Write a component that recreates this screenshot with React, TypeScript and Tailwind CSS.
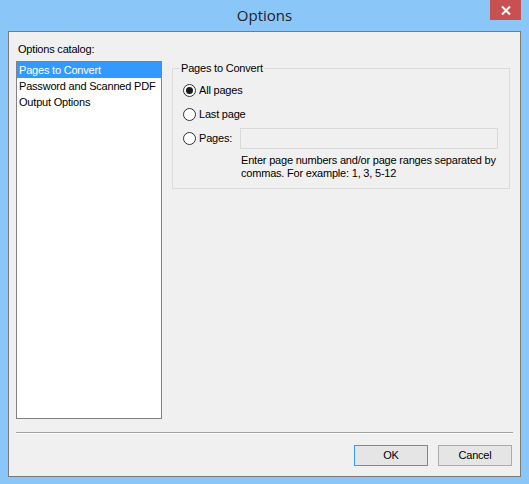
import React from 'react';

const font = { fontFamily: '"Liberation Sans", Arial, sans-serif' };

function Radio({ checked }: { checked?: boolean }) {
  return (
    <span className="w-[13px] h-[13px] rounded-full border border-[#333333] bg-white flex items-center justify-center shrink-0">
      {checked && <span className="w-[7px] h-[7px] rounded-full bg-[#1a1a1a]" />}
    </span>
  );
}

export default function App() {
  const catalog = ['Pages to Convert', 'Password and Scanned PDF', 'Output Options'];

  return (
    <div className="w-[529px] h-[484px] bg-[#8bc6f8] flex flex-col text-[11px] tracking-[-0.2px] text-black" style={font}>
      {/* Title bar */}
      <div className="h-[31px] relative flex items-center justify-center shrink-0">
        <span className="text-[15px] tracking-normal text-[#222] pb-[1px]" style={{ fontFamily: '"Open Sans", "Noto Sans", sans-serif' }}>
          Options
        </span>
        <div className="absolute top-0 right-[8px] w-[31px] h-[20px] bg-[#c75050] flex items-center justify-center">
          <svg width="10" height="9" viewBox="0 0 10 9">
            <path d="M1 0.5 L9 8.5 M9 0.5 L1 8.5" stroke="white" strokeWidth="2" />
          </svg>
        </div>
      </div>

      {/* Client area */}
      <div className="mx-[8px] h-[446px] border border-[#7b7b7b] bg-[#f0f0f0] flex flex-col shrink-0">
        <div className="flex pt-[10px] pl-[7px] pr-[10px]">
          <div className="flex flex-col w-[146px]">
            <div className="leading-[14px] pl-[2px] h-[14px]">Options catalog:</div>
            <div className="mt-[5px] h-[358px] border border-[#828282] bg-white">
              {catalog.map((item, i) => (
                <div
                  key={item}
                  className={`h-[16px] leading-[16px] pl-[2px] whitespace-nowrap ${i === 0 ? 'bg-[#3399ff] text-white' : ''}`}
                >
                  {item}
                </div>
              ))}
            </div>
          </div>

          <fieldset className="ml-[10px] mt-[19px] w-[338px] h-[128px] border border-[#dcdcdc] self-start">
            <legend className="ml-[7px] px-[1px] leading-[14px]">Pages to Convert</legend>
            <div className="flex flex-col pl-[10px] pr-[11px] pb-[7px]">
              <div className="h-[24px] flex items-center mt-[3px]">
                <Radio checked />
                <span className="ml-[3px]">All pages</span>
              </div>
              <div className="h-[24px] flex items-center">
                <Radio />
                <span className="ml-[3px]">Last page</span>
              </div>
              <div className="h-[24px] flex items-center">
                <Radio />
                <span className="ml-[3px] w-[41px]">Pages:</span>
                <div className="w-[258px] h-[21px] border border-[#d9d9d9] bg-[#f0f0f0]" />
              </div>
              <div className="ml-[58px] mt-[4px] leading-[13px] whitespace-nowrap">
                Enter page numbers and/or page ranges separated by
                <br />
                commas. For example: 1, 3, 5-12
              </div>
            </div>
          </fieldset>
        </div>

        {/* Separator */}
        <div className="mt-[13px] mx-[7px] border-t border-[#a0a0a0] border-b border-b-white" />

        {/* Buttons */}
        <div className="mt-[11px] flex justify-end gap-[10px] pr-[8px]">
          <button className="w-[74px] h-[21px] border border-[#3399ff] bg-[#e5e5e5] text-[11px] text-black">
            OK
          </button>
          <button className="w-[74px] h-[21px] border border-[#acacac] bg-[#e5e5e5] text-[11px] text-black">
            Cancel
          </button>
        </div>
      </div>
    </div>
  );
}
